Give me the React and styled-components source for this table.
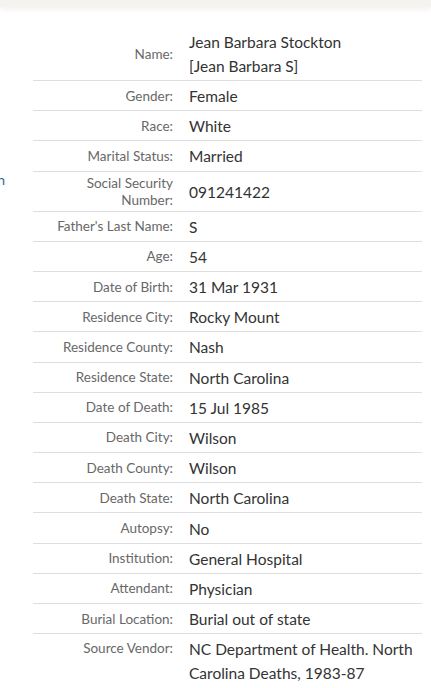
import React from "react";
import styled, { createGlobalStyle } from "styled-components";

const Global = createGlobalStyle`
  html, body { margin: 0; padding: 0; background: #fff; }
  body { font-family: Lato, "Noto Sans", sans-serif; overflow: hidden; }
`;

const TopBar = styled.div`
  height: 7px;
  background: #f4f3ef;
  box-shadow: 0 2px 5px rgba(200, 195, 180, 0.25);
`;

const Main = styled.div`
  display: flex;
  align-items: flex-start;
`;

const Sidebar = styled.div`
  width: 33px;
  flex: none;
  overflow: hidden;
  padding-top: 163px;
  display: flex;
  justify-content: flex-end;
`;

const SideLink = styled.a`
  white-space: nowrap;
  margin-right: 28px;
  font-size: 14px;
  line-height: 20px;
  color: #1f6a9b;
  text-decoration: none;
`;

const Table = styled.div`
  width: 389px;
  margin-top: 20px;
`;

const Row = styled.div`
  display: grid;
  grid-template-columns: 140px 1fr;
  column-gap: 16px;
  padding: 3px 0 2px;
  border-top: ${(p) => (p.$first ? "none" : "1px solid #dedede")};
  min-height: 30.2px;
  box-sizing: border-box;
  align-items: ${(p) => (p.$alignTop ? "start" : "center")};
`;

const Label = styled.div`
  text-align: right;
  font-size: 13.5px;
  line-height: 17px;
  color: #686868;
  padding-top: ${(p) => (p.$alignTop ? "3px" : "0")};
`;

const Value = styled.div`
  font-size: 15.5px;
  line-height: 24px;
  color: #333;
  padding-right: 8px;
`;

const rows = [
  ["Name:", "Jean Barbara Stockton\n[Jean Barbara S]"],
  ["Gender:", "Female"],
  ["Race:", "White"],
  ["Marital Status:", "Married"],
  ["Social Security Number:", "091241422"],
  ["Father's Last Name:", "S"],
  ["Age:", "54"],
  ["Date of Birth:", "31 Mar 1931"],
  ["Residence City:", "Rocky Mount"],
  ["Residence County:", "Nash"],
  ["Residence State:", "North Carolina"],
  ["Date of Death:", "15 Jul 1985"],
  ["Death City:", "Wilson"],
  ["Death County:", "Wilson"],
  ["Death State:", "North Carolina"],
  ["Autopsy:", "No"],
  ["Institution:", "General Hospital"],
  ["Attendant:", "Physician"],
  ["Burial Location:", "Burial out of state"],
  ["Source Vendor:", "NC Department of Health. North Carolina Deaths, 1983-87", true],
];

export default function App() {
  return (
    <>
      <Global />
      <TopBar />
      <Main>
        <Sidebar>
          <SideLink href="#">Discussion</SideLink>
        </Sidebar>
        <Table>
          {rows.map(([label, value, top], i) => (
            <Row key={label} $first={i === 0} $alignTop={top}>
              <Label $alignTop={top}>
                {label === "Social Security Number:" ? (
                  <>
                    Social Security
                    <br />
                    Number:
                  </>
                ) : (
                  label
                )}
              </Label>
              <Value>
                {value.split("\n").map((l, j) => (
                  <div key={j}>{l}</div>
                ))}
              </Value>
            </Row>
          ))}
        </Table>
      </Main>
    </>
  );
}
